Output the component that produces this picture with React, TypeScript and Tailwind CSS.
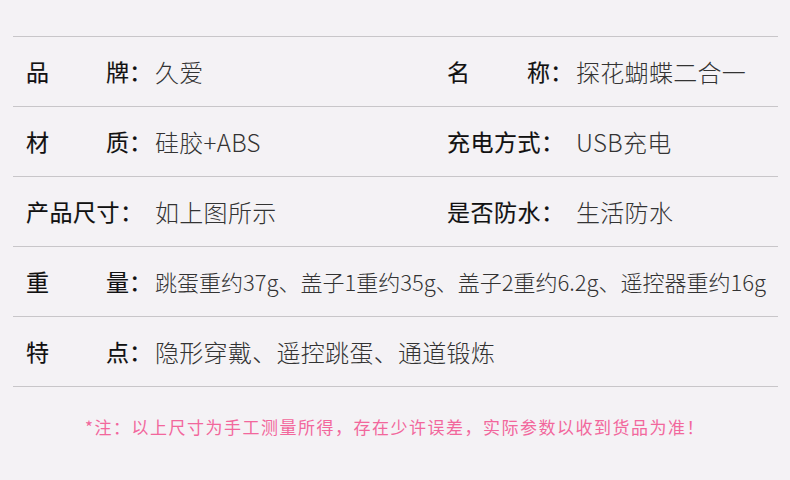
import React from "react"

const font = { fontFamily: '"Noto Sans CJK SC", "Noto Sans", sans-serif' }

function Label({ text }: { text: string }) {
  const chars = text.split("")
  return (
    <div className="flex w-[129px] shrink-0 items-center text-[23px] font-normal text-[#111] [-webkit-text-stroke:0.15px_#111]">
      {chars.length === 2 ? (
        <span className="flex w-[103px] justify-between">
          <span>{chars[0]}</span>
          <span>{chars[1]}</span>
        </span>
      ) : (
        <span className="tracking-[0.5px]">{text}</span>
      )}
      <span>：</span>
    </div>
  )
}

function Cell({ label, value }: { label: string; value: string }) {
  return (
    <div className="flex items-center">
      <Label text={label} />
      <span className="text-[24px] font-light tracking-[0.3px] text-[#333]">{value}</span>
    </div>
  )
}

const rows = [
  [
    { label: "品牌", value: "久爱" },
    { label: "名称", value: "探花蝴蝶二合一" },
  ],
  [
    { label: "材质", value: "硅胶+ABS" },
    { label: "充电方式", value: "USB充电" },
  ],
  [
    { label: "产品尺寸", value: "如上图所示" },
    { label: "是否防水", value: "生活防水" },
  ],
]

export default function App() {
  return (
    <div className="h-[480px] w-[790px] bg-[#f4f2f5] pt-[36px]" style={font}>
      <div className="mx-[13px] w-[765px] border-t border-[#c8c6c9]">
        {rows.map((row, i) => (
          <div
            key={i}
            className="grid h-[70px] grid-cols-[421px_1fr] items-center border-b border-[#c8c6c9] pl-[13px]"
          >
            <Cell {...row[0]} />
            <Cell {...row[1]} />
          </div>
        ))}
        <div className="flex h-[70px] items-center border-b border-[#c8c6c9] pl-[13px]">
          <Label text="重量" />
          <span className="whitespace-nowrap text-[22px] font-light text-[#333]">
            跳蛋重约37g、盖子1重约35g、盖子2重约6.2g、遥控器重约16g
          </span>
        </div>
        <div className="flex h-[70px] items-center border-b border-[#c8c6c9] pl-[13px]">
          <Label text="特点" />
          <span className="text-[24px] font-light tracking-[0.3px] text-[#333]">
            隐形穿戴、遥控跳蛋、通道锻炼
          </span>
        </div>
      </div>
      <p className="mt-[27px] text-center text-[17px] tracking-[1.5px] text-[#f2679c]">
        *注：以上尺寸为手工测量所得，存在少许误差，实际参数以收到货品为准！
      </p>
    </div>
  )
}
